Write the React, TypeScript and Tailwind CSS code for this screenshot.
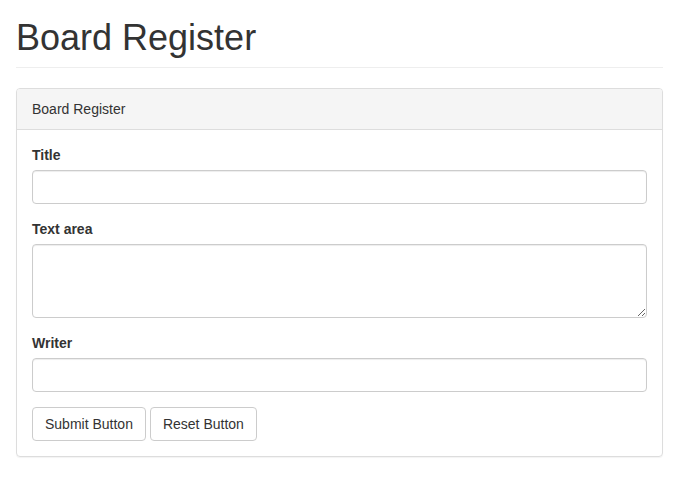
import React from 'react';

const inputCls =
    "block w-full h-[34px] px-3 py-1.5 text-sm text-[#555] bg-white border border-[#ccc] rounded-[4px] shadow-[inset_0_1px_1px_rgba(0,0,0,0.075)] outline-none";

function Field({ label, children }: { label: string; children: React.ReactNode }) {
    return (
        <div className="mb-[15px]">
            <label className="block mb-[5px] text-sm leading-5 font-bold text-[#333]">{label}</label>
            {children}
        </div>
    );
}

export default function App() {
    return (
        <div className="min-h-[497px] bg-white pl-4 pr-[15px] text-[#333] font-['Liberation_Sans',Arial,sans-serif]">
            {/* Page header */}
            <div className="pt-[18px] pb-[9px] mb-5 border-b border-[#eee]">
                <h1 className="text-[36px] leading-[40px] font-medium text-[#333]">Board Register</h1>
            </div>

            {/* Panel */}
            <div className="border border-[#ddd] rounded-[4px] shadow-[0_1px_1px_rgba(0,0,0,0.05)]">
                <div className="px-[15px] py-2.5 bg-[#f5f5f5] border-b border-[#ddd] rounded-t-[3px] text-sm leading-5 text-[#333]">
                    Board Register
                </div>
                <form className="p-[15px]" onSubmit={e => e.preventDefault()}>
                    <Field label="Title">
                        <input type="text" className={inputCls} />
                    </Field>
                    <Field label="Text area">
                        <textarea
                            rows={3}
                            className="block w-full h-[74px] px-3 py-1.5 text-sm text-[#555] bg-white border border-[#ccc] rounded-[4px] shadow-[inset_0_1px_1px_rgba(0,0,0,0.075)] outline-none resize-y"
                        />
                    </Field>
                    <Field label="Writer">
                        <input type="text" className={inputCls} />
                    </Field>
                    <div className="flex gap-1">
                        <button type="submit" className="h-[34px] px-3 text-sm text-[#333] bg-white border border-[#ccc] rounded-[4px]">
                            Submit Button
                        </button>
                        <button type="reset" className="h-[34px] px-3 text-sm text-[#333] bg-white border border-[#ccc] rounded-[4px]">
                            Reset Button
                        </button>
                    </div>
                </form>
            </div>
        </div>
    );
}
